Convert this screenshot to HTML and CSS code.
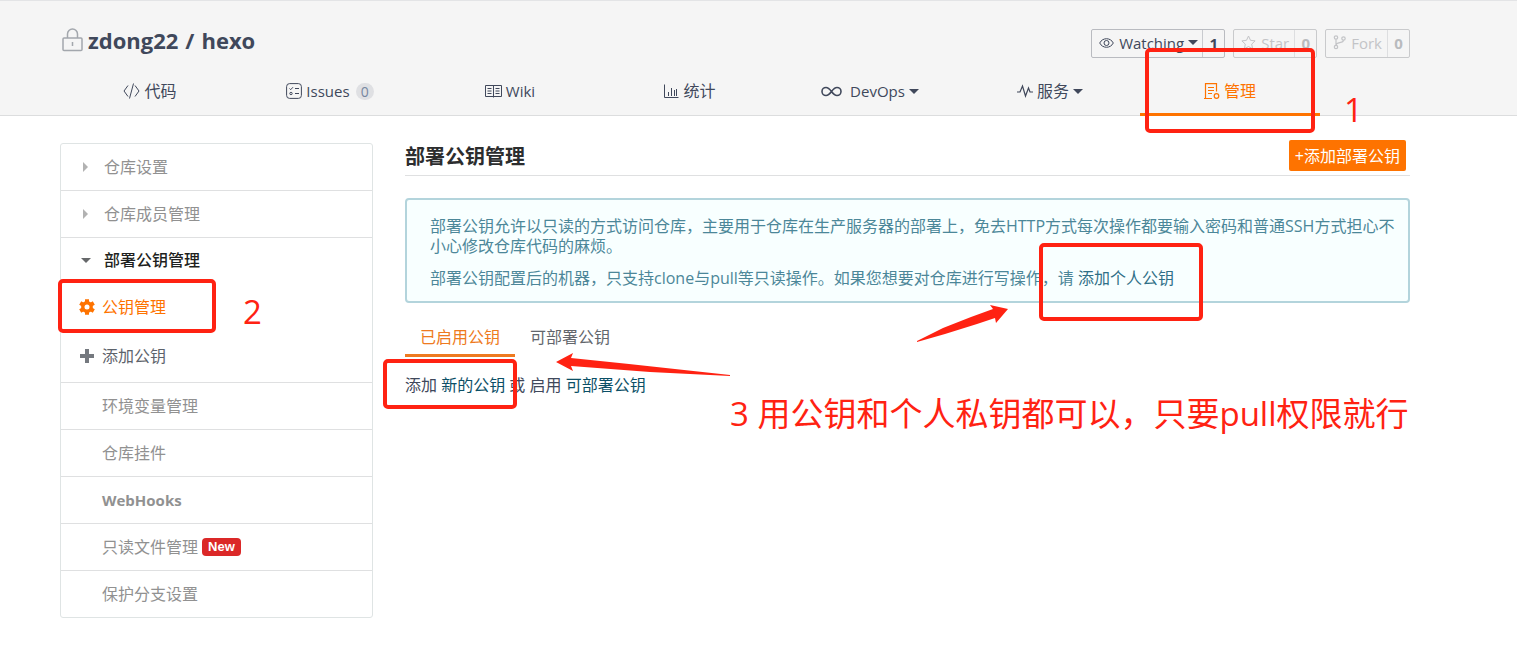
FILE: index.html
```html
<!DOCTYPE html>
<html lang="zh-CN">

<head>
  <meta charset="UTF-8">
  <meta name="viewport" content="width=device-width, initial-scale=1.0">
  <title>部署公钥管理</title>
  <link rel="stylesheet" href="styles.css">
</head>

<body>
  <header class="header">
    <div class="repo">
      <h1 class="repo-name">
        <svg class="lock" width="22" height="24" viewBox="0 0 22 24" fill="none" stroke="#a3a7ad" stroke-width="1.5">
          <rect x="1" y="10" width="19" height="12.500" rx="1" />
          <path d="M5.500 10V6a5 5 0 0 1 10 0v4M10.500 14v4" />
        </svg>
        <a href="#">zdong22</a> / <a href="#">hexo</a>
      </h1>
      <div class="actions">
        <div class="action">
          <button class="action-btn" type="button">
            <svg width="15" height="12" viewBox="0 0 15 12" fill="none" stroke="currentColor">
              <path d="M.7 6C3.500.3 11.500.3 14.300 6C11.500 11.700 3.500 11.700.7 6z" />
              <circle cx="7.500" cy="6" r="2.500" />
            </svg>
            Watching
            <i class="caret"></i>
          </button>
          <a class="count" href="#">1</a>
        </div>
        <div class="action disabled">
          <button class="action-btn" type="button" disabled>
            <svg width="15" height="15" viewBox="0 0 15 15" fill="none" stroke="currentColor">
              <path d="M7.500 1l2 4.300 4.600.6-3.400 3.200.9 4.700-4.100-2.300-4.100 2.300.9-4.700L.9 5.900l4.600-.6z" />
            </svg>
            Star
          </button>
          <a class="count" href="#">0</a>
        </div>
        <div class="action disabled">
          <button class="action-btn" type="button" disabled>
            <svg width="13" height="15" viewBox="0 0 13 15" fill="none" stroke="currentColor" stroke-width="1.200">
              <circle cx="3" cy="2.500" r="1.700" />
              <circle cx="3" cy="12" r="1.700" />
              <circle cx="10.500" cy="3.500" r="1.700" />
              <path d="M3 4.200v6.100M10.500 5.200c0 3.500-7.500 1.500-7.500 5" />
            </svg>
            Fork
          </button>
          <a class="count" href="#">0</a>
        </div>
      </div>
    </div>
    <nav class="nav">
      <a class="nav-item" href="#">
        <svg width="17" height="16" viewBox="0 0 17 16" fill="none" stroke="currentColor">
          <path d="M5 2.500L1 8l4 5.500M12 2.500L16 8l-4 5.500M10.500.5l-4 15" />
        </svg>
        <span class="cn">代码</span>
      </a>
      <a class="nav-item" href="#">
        <svg width="16" height="16" viewBox="0 0 16 16" fill="none" stroke="currentColor">
          <rect x=".6" y=".6" width="14.800" height="14.800" rx="3" />
          <path d="M3.500 5.500l1.200 1.200L7 4.200M9 5.500h4M9 10.500h4" />
          <circle cx="5" cy="10.500" r="1.200" />
        </svg>
        Issues
        <span class="badge">0</span>
      </a>
      <a class="nav-item" href="#">
        <svg width="17" height="13" viewBox="0 0 17 13" fill="none" stroke="currentColor">
          <path d="M.5.500h16v11H.5zM8.500.500v12M2.500 3.500h4M2.500 6h4M2.500 8.500h4M10.500 3.500h4M10.500 6h4M10.500 8.500h4" />
        </svg>
        Wiki
      </a>
      <a class="nav-item" href="#">
        <svg width="15" height="15" viewBox="0 0 15 15" fill="none" stroke="currentColor">
          <path d="M.5 .5v13h14M4.500 12V8M7.500 12V4M10.500 12V6M12.500 12V5" />
        </svg>
        <span class="cn">统计</span>
      </a>
      <a class="nav-item" href="#">
        <svg class="devops" width="21" height="11" viewBox="0 0 21 11" fill="none" stroke="currentColor" stroke-width="1.600">
          <path d="M10.500 5.500C8.500 2.800 7 1.500 5 1.500a4 4 0 0 0 0 8c2 0 3.500-1.300 5.500-4s3.500-4 5.500-4a4 4 0 0 1 0 8c-2 0-3.500-1.300-5.500-4z" />
        </svg>
        DevOps
        <i class="caret"></i>
      </a>
      <a class="nav-item" href="#">
        <svg width="16" height="14" viewBox="0 0 16 14" fill="none" stroke="currentColor" stroke-width="1.200">
          <path d="M0 8h3L5.500 2l3 10L11.500 4l1.500 4h3" />
        </svg>
        <span class="cn">服务</span>
        <i class="caret"></i>
      </a>
      <a class="nav-item active" href="#">
        <svg width="16" height="17" viewBox="0 0 16 17" fill="none" stroke="currentColor" stroke-width="1.200">
          <path d="M12.500 8.500V.7H1.500V15.500H8M0 15.500h8M4 4.500h6M4 7.500h6M4 10.500h4" />
          <circle cx="12.500" cy="13" r="2.300" />
        </svg>
        <span class="cn">管理</span>
      </a>
    </nav>
  </header>

  <main class="main">
    <aside class="sidebar">
      <a class="side-item" href="#"><i class="arrow"></i>仓库设置</a>
      <a class="side-item" href="#"><i class="arrow"></i>仓库成员管理</a>
      <div class="side-group">
        <a class="side-item open" href="#"><i class="arrow down"></i>部署公钥管理</a>
        <a class="sub-item active" href="#">
          <svg width="16" height="16" viewBox="0 0 16 16" fill="none" stroke="currentColor">
            <circle cx="8" cy="8" r="4.200" stroke-width="3.400" />
            <path stroke-width="4" d="M8 .2v3M8 12.800v3M1.200 4.100l2.600 1.500M12.200 10.400l2.600 1.500M1.200 11.900l2.600-1.500M12.200 5.600l2.600-1.500" />
          </svg>
          公钥管理
        </a>
        <a class="sub-item" href="#">
          <svg width="16" height="16" viewBox="0 0 16 16" fill="none" stroke="#75797f" stroke-width="4">
            <path d="M8 1v14M1 8h14" />
          </svg>
          添加公钥
        </a>
      </div>
      <a class="side-item plain" href="#">环境变量管理</a>
      <a class="side-item plain" href="#">仓库挂件</a>
      <a class="side-item plain hooks" href="#">WebHooks</a>
      <a class="side-item plain" href="#">只读文件管理<span class="new">New</span></a>
      <a class="side-item plain" href="#">保护分支设置</a>
    </aside>

    <section class="content">
      <div class="content-head">
        <h2>部署公钥管理</h2>
        <button class="add-btn" type="button">+添加部署公钥</button>
      </div>
      <div class="message">
        <p>部署公钥允许以只读的方式访问仓库，主要用于仓库在生产服务器的部署上，免去HTTP方式每次操作都要输入密码和普通SSH方式担心不小心修改仓库代码的麻烦。</p>
        <p>部署公钥配置后的机器，只支持clone与pull等只读操作。如果您想要对仓库进行写操作，请 <a href="#">添加个人公钥</a></p>
      </div>
      <div class="tabs">
        <a class="tab active" href="#">已启用公钥</a>
        <a class="tab" href="#">可部署公钥</a>
      </div>
      <p class="empty">添加 <a href="#">新的公钥</a> 或 启用 <a href="#">可部署公钥</a></p>
    </section>
  </main>

  <!-- 标注 -->
  <div class="mark mark-manage"></div>
  <div class="mark mark-keys"></div>
  <div class="mark mark-new"></div>
  <div class="mark mark-personal"></div>
  <span class="note note-one">1</span>
  <span class="note note-two">2</span>
  <span class="note note-three">3 用公钥和个人私钥都可以，只要pull权限就行</span>
  <svg class="pointer pointer-tab" width="176" height="24" viewBox="0 0 176 24" fill="#ff2212">
    <path d="M1 9L18 0l-2 5 58 6 101 11v1l-80-4-79-6 2 5z" />
  </svg>
  <svg class="pointer pointer-personal" width="93" height="38" viewBox="0 0 93 38" fill="#ff2212">
    <path d="M92 4L74 0l3 4-22 8-28 11L1 36v1l28-8 32-10 18-6 1 5z" />
  </svg>
</body>

</html>
```
FILE: styles.css
```css
* {
  box-sizing: border-box;
}

body {
  margin: 0;
  position: relative;
  font-family: "Open Sans", "Noto Sans CJK SC", sans-serif;
  font-size: 16px;
  line-height: 20px;
  color: #40485b;
  background-color: #fff;
}

a {
  color: inherit;
  text-decoration: none;
}

svg {
  flex: none;
}

.header {
  padding: 23px 107px 0 60px;
  background-color: #f5f5f5;
  border-top: 1px solid #e3e4e6;
  border-bottom: 1px solid #dcddde;
}

.repo {
  display: flex;
  justify-content: space-between;
  height: 45px;
}

.repo-name {
  display: flex;
  align-items: center;
  gap: 7px;
  height: 32px;
  margin: 0;
  font-size: 22px;
  line-height: 32px;
}

.lock {
  margin-left: 2px;
  margin-right: -3px;
}

.actions {
  display: flex;
  gap: 8px;
  padding-top: 5px;
}

.action {
  display: flex;
  height: 29px;
  border: 1px solid #b9bbc0;
  border-radius: 2px;
  font-size: 15px;
}

.action-btn {
  display: flex;
  align-items: center;
  gap: 5px;
  padding: 0 5px 2px 7px;
  border: 0;
  background: none;
  font: inherit;
  color: inherit;
}

.count {
  width: 22px;
  border-left: 1px solid #c9cbcf;
  font-weight: bold;
  line-height: 26px;
  text-align: center;
}

.disabled {
  color: #c3c4c7;
  border-color: #c9cacc;
}

.disabled .count {
  color: #b9bbbe;
  border-color: #dddee0;
}

.caret {
  border: 5px solid transparent;
  border-top: 5px solid currentColor;
  border-bottom: 0;
}

.action .caret {
  margin: 0 -1px;
}

.nav {
  display: flex;
  margin: 0 90px -1px 0;
}

.nav-item {
  display: flex;
  flex: 1;
  align-items: center;
  justify-content: center;
  gap: 4px;
  height: 47px;
  border-bottom: 3px solid transparent;
  font-size: 15px;
}

.nav-item .cn {
  font-size: 16px;
}

.nav-item.active {
  color: #fe7300;
  border-color: #fe7300;
}

.devops {
  margin-right: 4px;
}

.badge {
  padding: 0 5px;
  margin-left: 2px;
  border-radius: 9px;
  background-color: #dfe0e3;
  color: #7686a0;
  font-size: 14px;
  line-height: 17px;
}

.main {
  display: flex;
  align-items: flex-start;
  gap: 32px;
  padding: 27px 107px 34px 60px;
}

.sidebar {
  flex: none;
  width: 313px;
  border: 1px solid #dfe4e4;
  border-radius: 3px;
}

.side-item {
  display: flex;
  align-items: center;
  height: 47px;
  padding-left: 19px;
  border-bottom: 1px solid #dfe0e1;
  color: #919191;
}

.side-item:last-child {
  height: 46px;
  border-bottom: 0;
}

.side-item.plain {
  padding-left: 41px;
}

.side-item.hooks {
  font-size: 15px;
  font-weight: bold;
}

.side-group {
  padding-bottom: 2px;
  border-bottom: 1px solid #dfe0e1;
}

.side-item.open {
  height: 44px;
  border-bottom: 0;
  color: #1e1f20;
  font-weight: 500;
}

.arrow {
  width: 24px;
}

.arrow::before {
  content: "";
  display: block;
  width: 0;
  margin-left: 3px;
  border: 5px solid transparent;
  border-left: 5px solid #b2b2b2;
  border-right: 0;
}

.arrow.down::before {
  margin-left: 1px;
  border: 5px solid transparent;
  border-top: 5px solid #66686a;
  border-bottom: 0;
}

.sub-item {
  display: flex;
  align-items: center;
  gap: 7px;
  height: 49px;
  padding-left: 18px;
  color: #5d636b;
}

.sub-item.active {
  color: #fe7300;
}

.new {
  margin-left: 4px;
  padding: 0 6px;
  border-radius: 4px;
  background-color: #db2828;
  color: #fff;
  font-family: "Liberation Sans", sans-serif;
  font-size: 13px;
  font-weight: bold;
  line-height: 18px;
}

.content {
  flex: 1;
  min-width: 0;
}

.content-head {
  display: flex;
  align-items: flex-start;
  justify-content: space-between;
  height: 33px;
  margin-bottom: 22px;
  border-bottom: 1px solid #dfe0e1;
}

.content-head h2 {
  margin: 0;
  font-size: 20px;
  line-height: 28px;
  color: #2c2d2e;
}

.add-btn {
  height: 31px;
  margin: -3px 4px 0 0;
  padding: 0 6px;
  border: 0;
  border-radius: 2px;
  background-color: #fe7300;
  color: #fff;
  font: inherit;
}

.message {
  padding: 16px 8px 13px 23px;
  border: 2px solid #b3d4dc;
  border-radius: 4px;
  background-color: #f8ffff;
  color: #4c8799;
}

.message p {
  margin: 0;
}

.message p + p {
  margin-top: 12px;
}

.message a {
  color: #2f6f87;
}

.tabs {
  display: flex;
  margin-top: 20px;
}

.tab {
  height: 34px;
  padding: 4px 15px 0;
  border-bottom: 3px solid transparent;
  color: #62666c;
}

.tab.active {
  color: #ee7a20;
  border-color: #ee7a20;
}

.empty {
  margin: 18px 0 0;
}

.empty a {
  color: #0b4f66;
}

/* 标注 */
.mark {
  position: absolute;
  border: 4px solid #ff2212;
  border-radius: 5px;
}

.mark-manage {
  left: 1145px;
  top: 48px;
  width: 170px;
  height: 85px;
}

.mark-keys {
  left: 58px;
  top: 279px;
  width: 158px;
  height: 54px;
}

.mark-new {
  left: 383px;
  top: 359px;
  width: 134px;
  height: 50px;
}

.mark-personal {
  left: 1039px;
  top: 243px;
  width: 164px;
  height: 78px;
}

.note {
  position: absolute;
  color: #ff2212;
  font-size: 33px;
  line-height: 44px;
  white-space: nowrap;
}

.note-one {
  left: 1344px;
  top: 88px;
}

.note-two {
  left: 243px;
  top: 290px;
}

.note-three {
  left: 730px;
  top: 392px;
}

.pointer {
  position: absolute;
}

.pointer-tab {
  left: 555px;
  top: 353px;
}

.pointer-personal {
  left: 916px;
  top: 305px;
}
```
